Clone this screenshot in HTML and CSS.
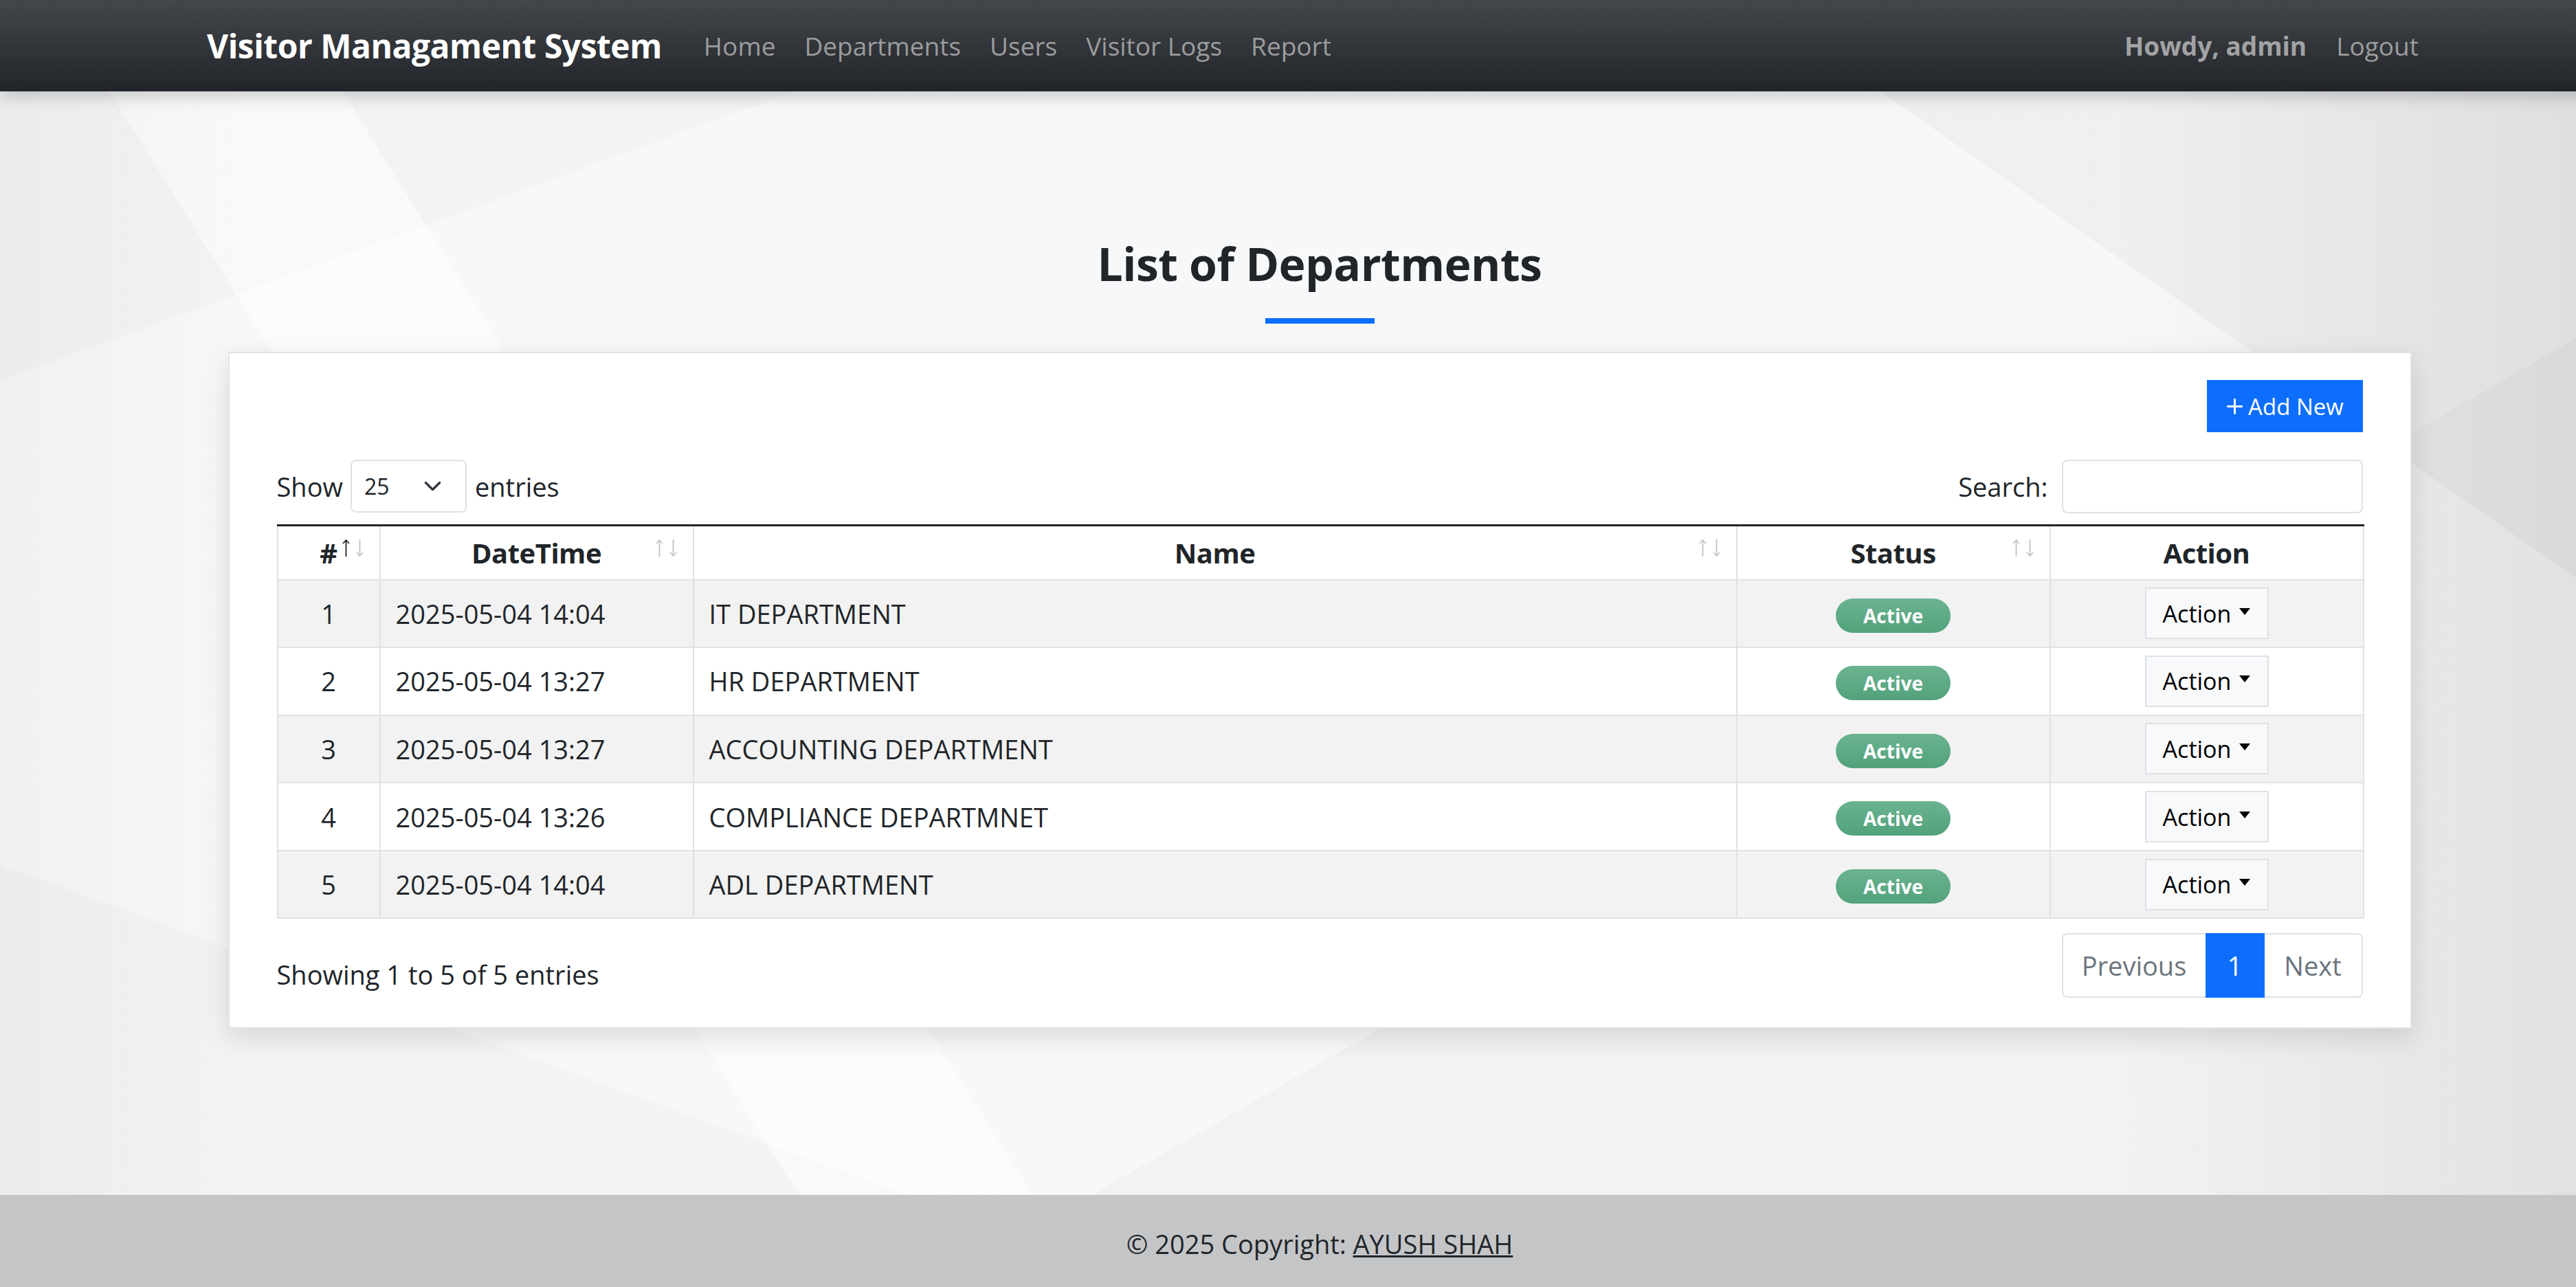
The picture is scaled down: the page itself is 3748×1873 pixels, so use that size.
FILE: index.html
```html
<!DOCTYPE html>
<html lang="en">
<head>
<meta charset="utf-8">
<title>Visitor Managament System</title>
<link rel="stylesheet" href="styles.css">
</head>
<body>
<div class="page">
  <nav class="navbar">
    <a class="brand" href="#">Visitor Managament System</a>
    <ul class="nav-links">
      <li><a class="nav-link" href="#">Home</a></li>
      <li><a class="nav-link" href="#">Departments</a></li>
      <li><a class="nav-link" href="#">Users</a></li>
      <li><a class="nav-link" href="#">Visitor Logs</a></li>
      <li><a class="nav-link" href="#">Report</a></li>
    </ul>
    <div class="nav-right">
      <span class="howdy">Howdy, admin</span>
      <a class="nav-link" href="#">Logout</a>
    </div>
  </nav>

  <main class="main">
    <h1 class="title">List of Departments</h1>
    <div class="title-bar"></div>

    <section class="card">
      <div class="card-top">
        <button class="btn-add" type="button"><svg class="plus" viewBox="0 0 24 24" width="27" height="27"><path d="M12 3v18M3 12h18" stroke="#fff" stroke-width="2.6" stroke-linecap="round" fill="none"/></svg>Add New</button>
      </div>

      <div class="dt-controls">
        <div class="dt-length">
          <span>Show</span>
          <span class="select"><span>25</span><svg viewBox="0 0 16 16" width="27" height="27"><path d="M2 5l6 6 6-6" stroke="#343a40" stroke-width="2" fill="none" stroke-linecap="round" stroke-linejoin="round"/></svg></span>
          <span>entries</span>
        </div>
        <div class="dt-search">
          <span>Search:</span>
          <span class="search-input"></span>
        </div>
      </div>

      <table class="dt">
        <colgroup>
          <col class="c-num"><col class="c-date"><col class="c-name"><col class="c-status"><col class="c-action">
        </colgroup>
        <thead>
          <tr>
            <th>#<svg class="sort" viewBox="0 0 31 27" width="31" height="27"><path d="M5.5 26V2M1 7l4.5-5 4.5 5" stroke="#212529" stroke-width="1.8" fill="none"/><path d="M25.5 1v24M21 20l4.5 5 4.5-5" stroke="#c3c4c6" stroke-width="1.8" fill="none"/></svg></th>
            <th>DateTime<svg class="sort" viewBox="0 0 31 27" width="31" height="27"><path d="M5.5 26V2M1 7l4.5-5 4.5 5" stroke="#c3c4c6" stroke-width="1.8" fill="none"/><path d="M25.5 1v24M21 20l4.5 5 4.5-5" stroke="#c3c4c6" stroke-width="1.8" fill="none"/></svg></th>
            <th>Name<svg class="sort" viewBox="0 0 31 27" width="31" height="27"><path d="M5.5 26V2M1 7l4.5-5 4.5 5" stroke="#c3c4c6" stroke-width="1.8" fill="none"/><path d="M25.5 1v24M21 20l4.5 5 4.5-5" stroke="#c3c4c6" stroke-width="1.8" fill="none"/></svg></th>
            <th>Status<svg class="sort" viewBox="0 0 31 27" width="31" height="27"><path d="M5.5 26V2M1 7l4.5-5 4.5 5" stroke="#c3c4c6" stroke-width="1.8" fill="none"/><path d="M25.5 1v24M21 20l4.5 5 4.5-5" stroke="#c3c4c6" stroke-width="1.8" fill="none"/></svg></th>
            <th>Action</th>
          </tr>
        </thead>
        <tbody>
          <tr>
            <td class="center">1</td><td>2025-05-04 14:04</td><td>IT DEPARTMENT</td>
            <td class="center"><span class="badge">Active</span></td>
            <td class="center"><span class="btn-action">Action<i class="caret"></i></span></td>
          </tr>
          <tr>
            <td class="center">2</td><td>2025-05-04 13:27</td><td>HR DEPARTMENT</td>
            <td class="center"><span class="badge">Active</span></td>
            <td class="center"><span class="btn-action">Action<i class="caret"></i></span></td>
          </tr>
          <tr>
            <td class="center">3</td><td>2025-05-04 13:27</td><td>ACCOUNTING DEPARTMENT</td>
            <td class="center"><span class="badge">Active</span></td>
            <td class="center"><span class="btn-action">Action<i class="caret"></i></span></td>
          </tr>
          <tr>
            <td class="center">4</td><td>2025-05-04 13:26</td><td>COMPLIANCE DEPARTMNET</td>
            <td class="center"><span class="badge">Active</span></td>
            <td class="center"><span class="btn-action">Action<i class="caret"></i></span></td>
          </tr>
          <tr>
            <td class="center">5</td><td>2025-05-04 14:04</td><td>ADL DEPARTMENT</td>
            <td class="center"><span class="badge">Active</span></td>
            <td class="center"><span class="btn-action">Action<i class="caret"></i></span></td>
          </tr>
        </tbody>
      </table>

      <div class="dt-bottom">
        <div class="dt-info">Showing 1 to 5 of 5 entries</div>
        <ul class="pagination">
          <li class="page-item prev">Previous</li>
          <li class="page-item active">1</li>
          <li class="page-item next">Next</li>
        </ul>
      </div>
    </section>
  </main>

  <footer class="footer">
    <span>© 2025 Copyright:&nbsp;<a href="#">AYUSH SHAH</a></span>
  </footer>
</div>
</body>
</html>
```

FILE: styles.css
```css
* { box-sizing: border-box; }

html, body {
  margin: 0;
  padding: 0;
  overflow: hidden;
}

body {
  font-family: "Open Sans", "Noto Sans", sans-serif;
  color: #212529;
  background: #f6f7f8;
}

.page {
  width: 3840px;
  height: 1873px;
  display: flex;
  flex-direction: column;
}

/* ---------- Navbar ---------- */
.navbar {
  flex: none;
  height: 133px;
  display: flex;
  align-items: center;
  padding: 0 301px;
  background: linear-gradient(180deg, #43464a 0%, #212428 100%);
  box-shadow: 0 8px 22px rgba(0, 0, 0, 0.18);
  position: relative;
  z-index: 2;
}

.brand {
  font-size: 48px;
  font-weight: 700;
  color: #fff;
  text-decoration: none;
  margin-right: 40px;
  white-space: nowrap;
  letter-spacing: -0.5px;
}

.nav-links {
  display: flex;
  list-style: none;
  margin: 0;
  padding: 0;
  flex: 1;
}

.nav-link {
  display: block;
  padding: 0 21px;
  font-size: 37px;
  color: #9b9c9e;
  text-decoration: none;
  white-space: nowrap;
}

.nav-right {
  display: flex;
  align-items: center;
}

.nav-right .nav-link {
  padding: 0 20px;
}

.howdy {
  font-size: 37px;
  font-weight: 700;
  color: #a2a3a5;
  margin-right: 23px;
  white-space: nowrap;
}

/* ---------- Main ---------- */
.main {
  flex: 1;
  display: flex;
  flex-direction: column;
  align-items: center;
  background-color: #f7f8f9;
  background-image:
    linear-gradient(90deg, rgba(0,0,0,0.03) 0%, rgba(0,0,0,0) 10%, rgba(0,0,0,0) 80%, rgba(0,0,0,0.08) 100%),
    linear-gradient(58deg, rgba(0,0,0,0) 24%, rgba(255,255,255,0.5) 24%, rgba(255,255,255,0.5) 31%, rgba(0,0,0,0) 31%),
    linear-gradient(150deg, rgba(0,0,0,0) 66%, rgba(0,0,0,0.025) 66%),
    linear-gradient(215deg, rgba(0,0,0,0.035) 18%, rgba(0,0,0,0) 18%),
    linear-gradient(160deg, rgba(0,0,0,0.02) 14%, rgba(0,0,0,0) 14%),
    linear-gradient(20deg, rgba(0,0,0,0.02) 16%, rgba(0,0,0,0) 16%);
}

.title {
  margin: 208px 0 0;
  font-size: 66px;
  font-weight: 700;
  line-height: 84px;
  letter-spacing: -0.5px;
  color: #212529;
}

.title-bar {
  width: 159px;
  height: 8px;
  background: #0d6efd;
  margin-top: 38px;
}

.card {
  width: 3177px;
  margin-top: 41px;
  background: #fff;
  border: 2px solid #e2e3e5;
  box-shadow: 0 12px 36px rgba(0, 0, 0, 0.12);
  padding: 39px 69px 43px;
  font-size: 38px;
}

.card-top {
  display: flex;
  justify-content: flex-end;
}

.btn-add {
  height: 76px;
  width: 227px;
  border: 0;
  border-radius: 0;
  background: #0d6efd;
  color: #fff;
  font-family: inherit;
  font-size: 33px;
  display: flex;
  align-items: center;
  justify-content: center;
  gap: 6px;
  padding: 0;
}

/* ---------- DataTable controls ---------- */
.dt-controls {
  margin-top: 40px;
  display: flex;
  justify-content: space-between;
  align-items: center;
  height: 77px;
}

.dt-length, .dt-search {
  display: flex;
  align-items: center;
}

.select {
  width: 169px;
  height: 77px;
  margin: 0 12px 0 11px;
  border: 2px solid #dee2e6;
  border-radius: 8px;
  display: flex;
  align-items: center;
  justify-content: space-between;
  padding: 0 34px 0 18px;
  font-size: 32px;
  background: #fff;
}

.search-input {
  width: 438px;
  height: 78px;
  margin-left: 20px;
  border: 2px solid #dee2e6;
  border-radius: 8px;
  background: #fff;
}

/* ---------- Table ---------- */
.dt {
  margin-top: 17px;
  width: 3035px;
  border-collapse: collapse;
  table-layout: fixed;
  border-top: 3px solid #212529;
}

.c-num { width: 149px; }
.c-date { width: 456px; }
.c-name { width: 1518px; }
.c-status { width: 456px; }
.c-action { width: 456px; }

.dt th {
  position: relative;
  height: 79px;
  font-size: 40px;
  font-weight: 700;
  text-align: center;
  padding: 0;
  border: 2px solid #dee2e6;
  border-top: 0;
  letter-spacing: -0.5px;
}

.dt .sort {
  position: absolute;
  top: 18px;
  right: 23px;
}

.dt td {
  height: 98.6px;
  padding: 0 22px;
  border: 2px solid #dee2e6;
  vertical-align: middle;
  white-space: nowrap;
}

.dt tbody tr:nth-child(odd) td {
  background: #f2f2f2;
}

.dt td.center {
  text-align: center;
  padding: 0;
}

.badge {
  display: inline-block;
  width: 167px;
  height: 50px;
  line-height: 50px;
  border-radius: 25px;
  background: linear-gradient(180deg, #6bb391 0%, #52a27b 100%);
  color: #fff;
  font-size: 28px;
  font-weight: 700;
  vertical-align: middle;
}

.btn-action {
  display: inline-flex;
  align-items: center;
  justify-content: center;
  width: 180px;
  height: 75px;
  background: #f8f9fa;
  border: 2px solid #dee2e6;
  color: #000;
  font-size: 34px;
  vertical-align: middle;
}

.caret {
  display: inline-block;
  margin-left: 12px;
  margin-top: -6px;
  border-top: 10px solid #000;
  border-left: 8px solid transparent;
  border-right: 8px solid transparent;
}

/* ---------- Bottom ---------- */
.dt-bottom {
  margin-top: 21px;
  display: flex;
  justify-content: space-between;
  align-items: flex-start;
}

.dt-info {
  padding-top: 32px;
  line-height: 57px;
}

.pagination {
  display: flex;
  list-style: none;
  margin: 0;
  padding: 0;
}

.page-item {
  height: 94px;
  display: flex;
  align-items: center;
  justify-content: center;
  border: 2px solid #dee2e6;
  color: #6c757d;
  font-size: 38px;
  background: #fff;
}

.page-item.prev {
  width: 209px;
  border-radius: 8px 0 0 8px;
  border-right: 0;
}

.page-item.active {
  width: 86px;
  background: #0d6efd;
  border-color: #0d6efd;
  color: #fff;
}

.page-item.next {
  width: 143px;
  border-radius: 0 8px 8px 0;
  border-left: 0;
}

/* ---------- Footer ---------- */
.footer {
  flex: none;
  height: 134px;
  background: #c4c5c7;
  display: flex;
  align-items: center;
  justify-content: center;
  padding-top: 8px;
  font-size: 38px;
  color: #212529;
}

.footer a {
  color: #212529;
  text-decoration: underline;
}
```
